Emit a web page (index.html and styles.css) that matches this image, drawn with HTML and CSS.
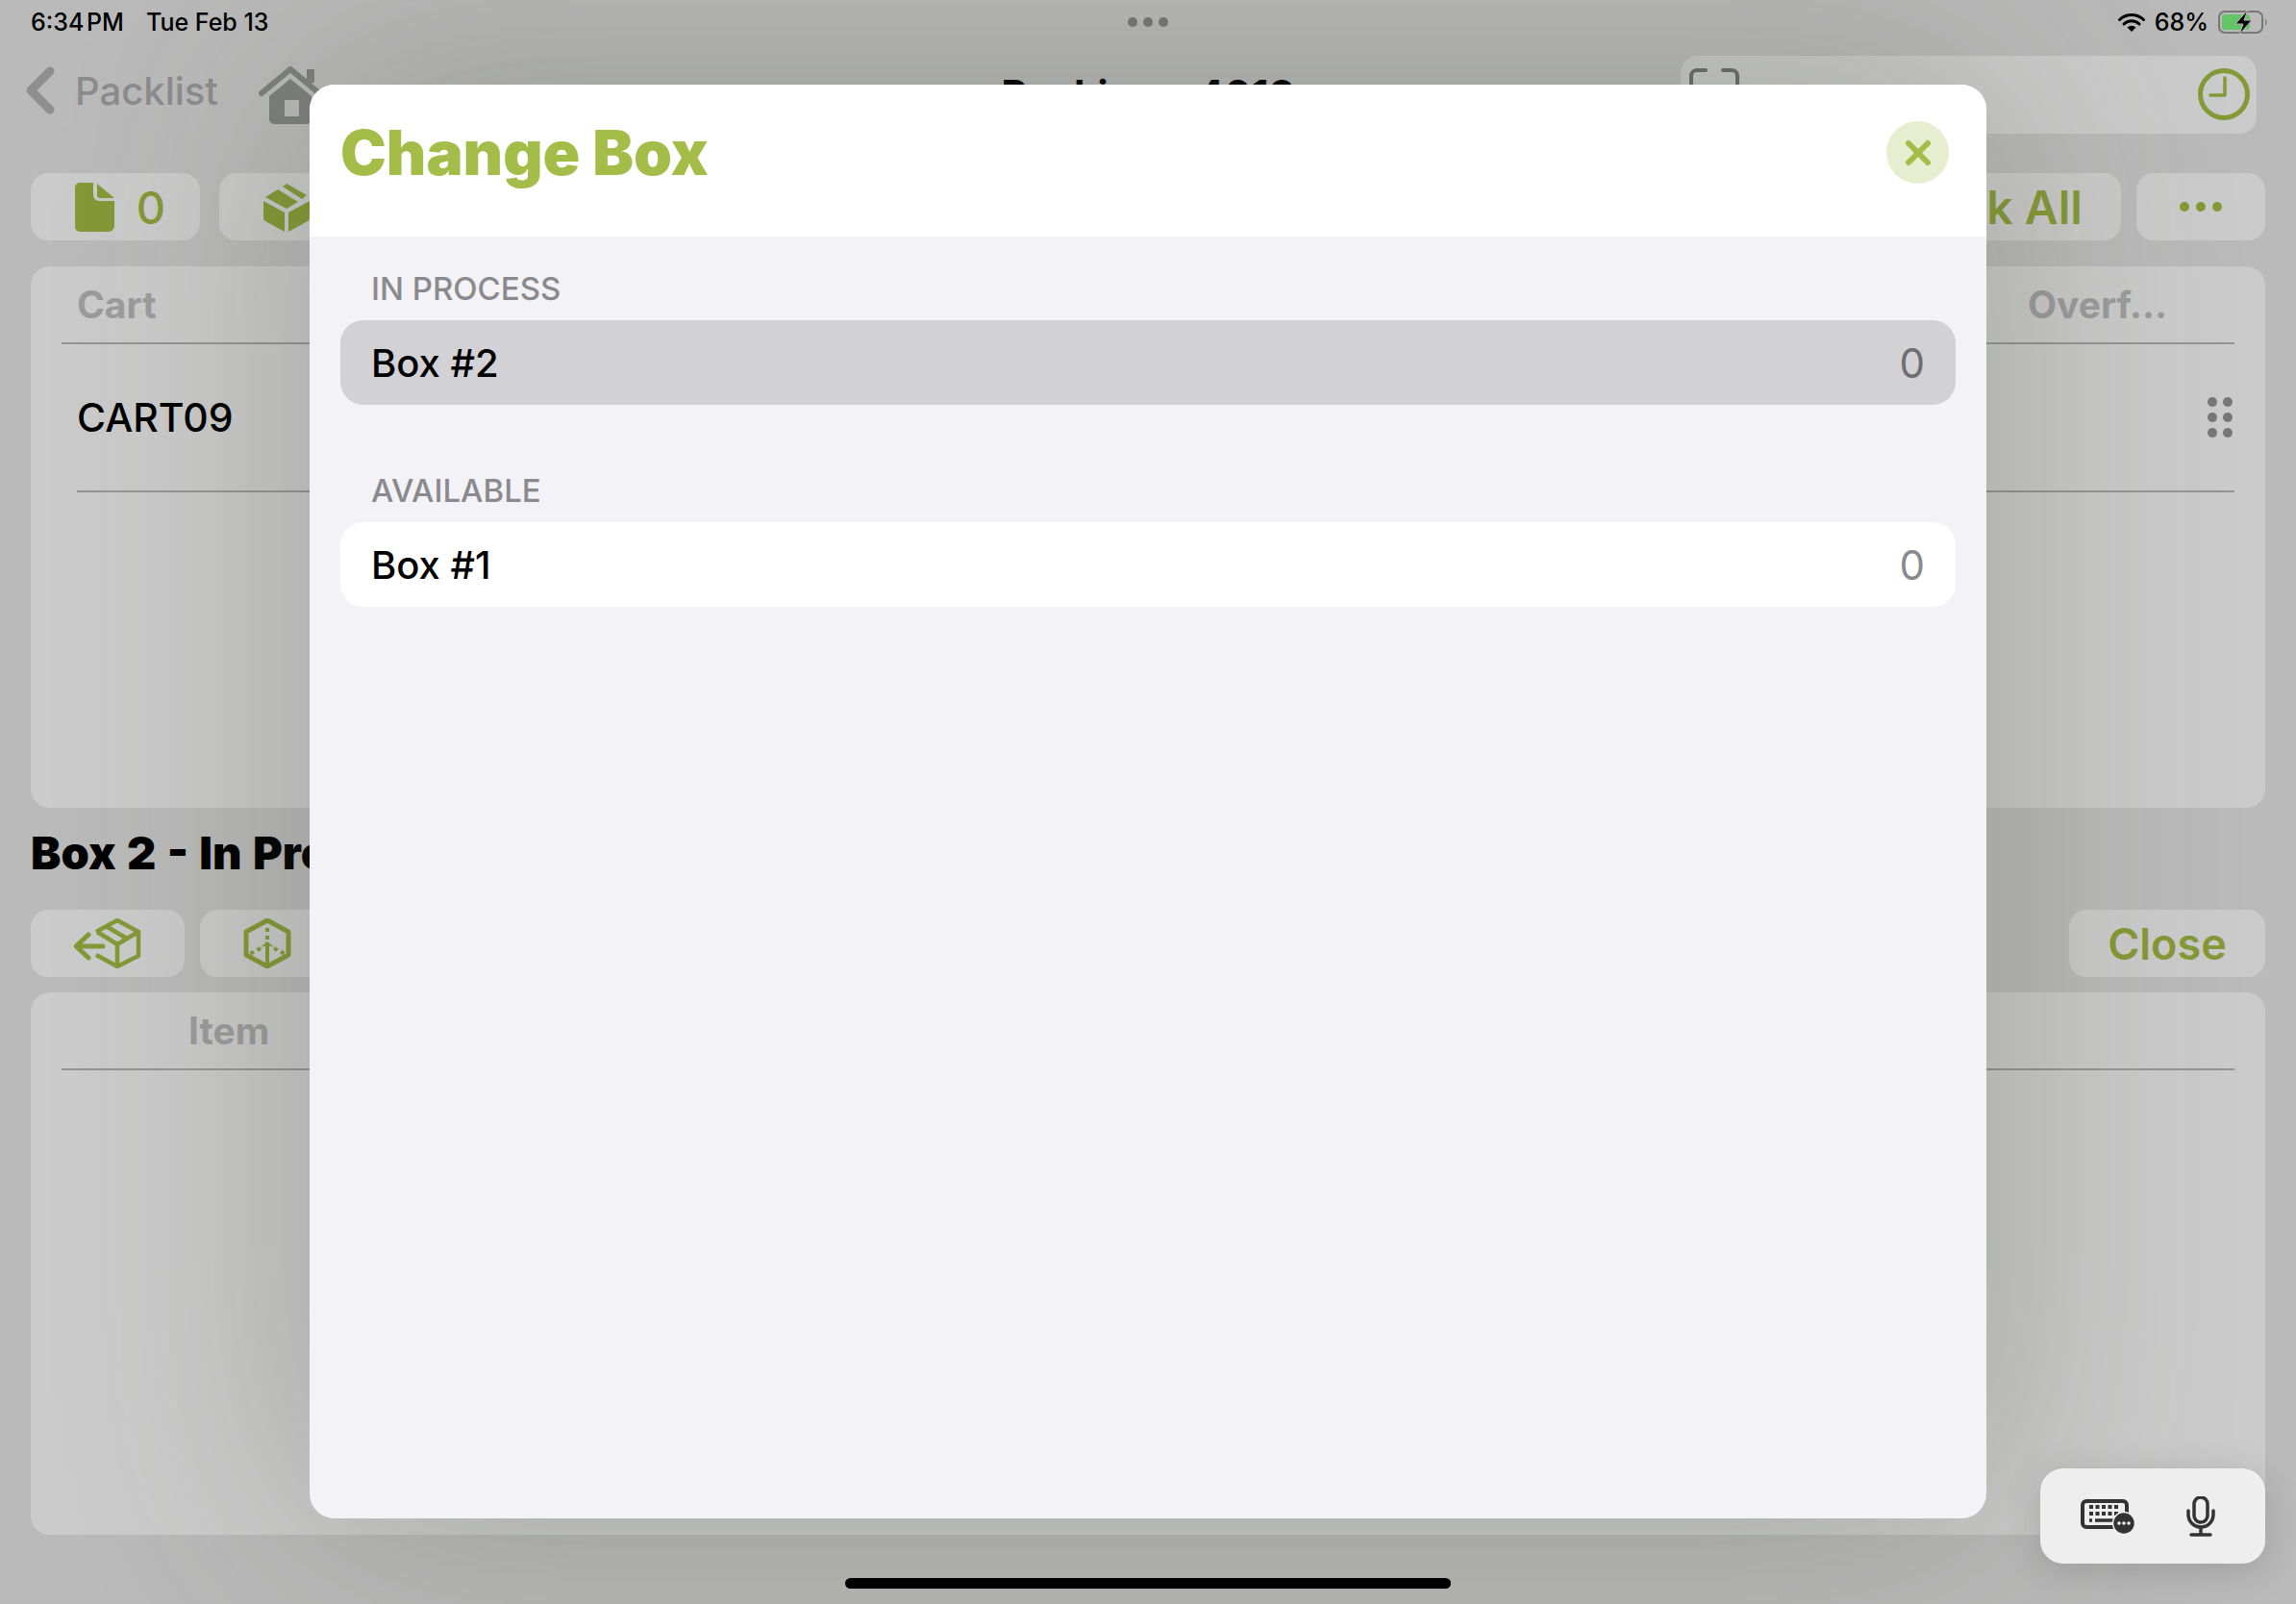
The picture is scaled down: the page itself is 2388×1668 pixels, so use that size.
FILE: index.html
```html
<!DOCTYPE html>
<html lang="en">
  <head>
    <meta charset="UTF-8" />
    <meta name="viewport" content="width=device-width, initial-scale=1.0" />
    <title>Change Box</title>
    <link rel="stylesheet" href="styles.css">
  </head>
  <body>
    <div class="screen">
      <!--Status bar-->
      <div class="status">
        <div class="status-left">
          <span class="time">6:34 PM</span>
          <span>Tue Feb 13</span>
        </div>
        <div class="status-dots"><i></i><i></i><i></i></div>
        <div class="status-right">
          <svg class="wifi" viewBox="0 0 28 20">
            <path d="M1.500 7.500a18 18 0 0 1 25 0" fill="none" stroke="#000" stroke-width="3" stroke-linecap="round" />
            <path d="M6 12a11.500 11.500 0 0 1 16 0" fill="none" stroke="#000" stroke-width="3" stroke-linecap="round" />
            <path d="M9.500 15.500a6.500 6.500 0 0 1 9 0L14 20z" fill="#000" />
          </svg>
          <span>68%</span>
          <svg class="battery" viewBox="0 0 52 26">
            <rect x="1" y="2" width="45" height="22" rx="6" fill="none" stroke="#777" stroke-width="2" />
            <rect x="4" y="5" width="29" height="16" rx="3" fill="#65c466" />
            <path d="M49 9.500c2 1 2 6 0 7z" fill="#777" />
            <path d="M31 0 18 15h8l-4 11 13-15h-8z" fill="#000" stroke="#bbb" stroke-width="1" />
          </svg>
        </div>
      </div>

      <!--Nav bar-->
      <div class="nav">
        <div class="nav-left">
          <svg class="back" viewBox="0 0 30 50">
            <path d="M25 5 5 25l20 20" fill="none" stroke="#8f8f8f" stroke-width="9" stroke-linecap="round" stroke-linejoin="round" />
          </svg>
          <span class="nav-back">Packlist</span>
          <svg class="home" viewBox="0 0 70 60">
            <path d="M3 28 33 3l30 25" fill="none" stroke="#7d7f7c" stroke-width="6" stroke-linecap="round" stroke-linejoin="round" />
            <path d="M50 3h8v14h-8z" fill="#7d7f7c" />
            <path d="M11 31 33 13l22 18v24a5 5 0 0 1-5 5H16a5 5 0 0 1-5-5zM27 35v17h15V35z" fill="#7d7f7c" fill-rule="evenodd" />
          </svg>
        </div>
        <div class="nav-title">Packing - 4013</div>
        <div class="search">
          <svg class="scan" viewBox="0 0 52 52">
            <path d="M2 16V8a6 6 0 0 1 6-6h9M35 2h9a6 6 0 0 1 6 6v8" fill="none" stroke="#6c6d6b" stroke-width="4" stroke-linecap="round" />
          </svg>
          <svg class="clock" viewBox="0 0 54 54">
            <circle cx="27" cy="27" r="24.500" fill="none" stroke="#869937" stroke-width="5" />
            <path d="M28 10v18H13" fill="none" stroke="#869937" stroke-width="3.500" stroke-linecap="round" stroke-linejoin="round" />
          </svg>
        </div>
      </div>

      <!--Top toolbar-->
      <div class="toolbar">
        <div class="tool tool-doc">
          <svg class="doc" viewBox="0 0 41 51">
            <path d="M5 0h14v13a6 6 0 0 0 6 6h16v26a6 6 0 0 1-6 6H5a5 5 0 0 1-5-5V5a5 5 0 0 1 5-5z" fill="#869937" />
            <path d="M23 1 41 16H26a3 3 0 0 1-3-3z" fill="#869937" />
          </svg>
          <span>0</span>
        </div>
        <div class="tool tool-box">
          <svg class="box-fill" viewBox="0 0 48 51">
            <path d="M0 19 22 31v20L2 40q-2-1-2-4zM26 31 48 19v17q0 3-2 4L26 51z" fill="#869937" />
            <path d="M2 15 15 7 36 20 24 27zM20 4l3-2q1-2 3 0L45 13 40 17z" fill="#869937" />
          </svg>
        </div>
        <div class="spacer"></div>
        <div class="tool tool-pack">Pack All</div>
        <div class="tool tool-more"><i></i><i></i><i></i></div>
      </div>

      <!--Cart table-->
      <div class="panel panel-cart">
        <div class="panel-head">
          <span>Cart</span>
          <span class="overflow">Overf...</span>
        </div>
        <div class="cart-row">
          <span>CART09</span>
          <div class="grip"><i></i><i></i><i></i><i></i><i></i><i></i></div>
        </div>
      </div>

      <h2 class="box-title">Box 2 - In Process</h2>

      <!--Box toolbar-->
      <div class="toolbar toolbar-box">
        <div class="tool tool-return">
          <svg class="box-return" viewBox="0 0 70 52">
            <path d="M15 17 2 29l13 12M3 29h27" fill="none" stroke="#869937" stroke-width="5" stroke-linecap="round" stroke-linejoin="round" />
            <path d="M23 14 45 2l22 12v25L45 50 23 38M24 14l21 13 22-13M45 27v23M33 8l22 13" fill="none" stroke="#869937" stroke-width="4.500" stroke-linejoin="round" />
          </svg>
        </div>
        <div class="tool tool-cube">
          <svg class="cube" viewBox="0 0 50 52">
            <path d="M25 2 47 14v24L25 50 3 38V14z" fill="none" stroke="#869937" stroke-width="5" stroke-linejoin="round" />
            <path d="M25 27v23" fill="none" stroke="#869937" stroke-width="4" />
            <path d="M18 30 25 24l7 6-7-2z" fill="#869937" />
            <path d="M25 22V6M18 31 5 38M32 31l13 7" fill="none" stroke="#869937" stroke-width="4" stroke-dasharray="4 4" />
          </svg>
        </div>
        <div class="spacer"></div>
        <div class="tool tool-close">Close</div>
      </div>

      <!--Item table-->
      <div class="panel panel-items">
        <div class="panel-head panel-head-item">
          <span>Item</span>
        </div>
      </div>
    </div>

    <!--Change box sheet-->
    <div class="modal">
      <div class="modal-head">
        <h1>Change Box</h1>
        <div class="modal-close">
          <svg viewBox="0 0 28 28">
            <path d="M4 4l20 20M24 4 4 24" fill="none" stroke="#a4bd48" stroke-width="6" stroke-linecap="round" />
          </svg>
        </div>
      </div>
      <div class="modal-body">
        <div class="section-label">IN PROCESS</div>
        <div class="box-row selected">
          <span>Box #2</span>
          <span class="count">0</span>
        </div>
        <div class="section-label section-gap">AVAILABLE</div>
        <div class="box-row">
          <span>Box #1</span>
          <span class="count">0</span>
        </div>
      </div>
    </div>

    <!--Keyboard shortcut bar-->
    <div class="kb-bar">
      <svg class="kb" viewBox="0 0 56 36">
        <rect x="2" y="2" width="46" height="27" rx="4" fill="none" stroke="#333" stroke-width="4" />
        <path d="M9 8h30M9 15h30" fill="none" stroke="#333" stroke-width="4" stroke-dasharray="4 2.500" />
        <path d="M9 22h3M15 22h20" fill="none" stroke="#333" stroke-width="3.500" />
        <circle cx="45" cy="25" r="11.500" fill="#333" stroke="#eee" stroke-width="1.500" />
        <circle cx="40" cy="25" r="1.800" fill="#eee" />
        <circle cx="45" cy="25" r="1.800" fill="#eee" />
        <circle cx="50" cy="25" r="1.800" fill="#eee" />
      </svg>
      <svg class="mic" viewBox="0 0 30 42">
        <rect x="8" y="1" width="14" height="26" rx="7" fill="none" stroke="#333" stroke-width="3.500" />
        <path d="M2 15v4a13 13 0 0 0 26 0v-4M15 32v7M5 40h20" fill="none" stroke="#333" stroke-width="3.500" stroke-linecap="round" />
      </svg>
    </div>

    <div class="home-bar"></div>
  </body>
</html>
```

FILE: styles.css
```css
html,
body {
  margin: 0;
  padding: 0;
  width: 100%;
  height: 100%;
  overflow: hidden;
}
body {
  position: relative;
  background: #bababa;
  font-family: "Inter", "Liberation Sans", sans-serif;
  color: #000;
}
svg {
  display: block;
  flex-shrink: 0;
}
.screen {
  display: flex;
  flex-direction: column;
  padding: 0 32px;
  box-sizing: border-box;
  height: 100%;
}

/*Status bar*/
.status {
  height: 46px;
  display: flex;
  align-items: center;
  justify-content: space-between;
  font-size: 25px;
  font-weight: 500;
  position: relative;
}
.status-left {
  display: flex;
  gap: 23px;
}
.time {
  word-spacing: -4px;
}
.status-dots {
  display: flex;
  gap: 6px;
  position: absolute;
  left: 1141px;
  top: 18px;
}
.status-dots i {
  width: 10px;
  height: 10px;
  border-radius: 50%;
  background: #777;
}
.status-right {
  display: flex;
  align-items: center;
  gap: 10px;
  margin-right: -3px;
}
.wifi {
  width: 28px;
  height: 20px;
}
.battery {
  width: 52px;
  height: 26px;
}

/*Nav bar*/
.nav {
  margin-top: 12px;
  height: 81px;
  display: grid;
  grid-template-columns: 1fr auto 1fr;
  align-items: center;
}
.nav-left {
  display: flex;
  align-items: center;
  padding-bottom: 9px;
}
.back {
  width: 30px;
  height: 50px;
  margin-left: -5px;
}
.nav-back {
  font-size: 40px;
  font-weight: 500;
  color: #8c8c8c;
  margin-left: 21px;
}
.home {
  width: 70px;
  height: 60px;
  margin-left: 42px;
  margin-top: 9px;
}
.nav-title {
  font-size: 42px;
  font-weight: 700;
}
.search {
  justify-self: end;
  width: 599px;
  height: 81px;
  margin-right: 9px;
  box-sizing: border-box;
  padding: 13px 7px 0 9px;
  background: #cbcbcb;
  border-radius: 18px;
  display: flex;
  justify-content: space-between;
}
.scan {
  width: 52px;
  height: 52px;
}
.clock {
  width: 54px;
  height: 54px;
}

/*Toolbars*/
.toolbar {
  margin-top: 41px;
  height: 70px;
  display: flex;
  gap: 20px;
}
.spacer {
  flex: 1;
}
.tool {
  background: #cbcbcb;
  border-radius: 18px;
  display: flex;
  align-items: center;
  justify-content: center;
  color: #869937;
  font-size: 47px;
  font-weight: 500;
}
.tool-doc {
  width: 176px;
  box-sizing: border-box;
  padding-left: 10px;
  gap: 23px;
}
.doc {
  width: 41px;
  height: 51px;
}
.tool-box {
  width: 170px;
  box-sizing: border-box;
  padding-left: 46px;
  justify-content: flex-start;
}
.box-fill {
  width: 48px;
  height: 51px;
}
.tool-pack {
  width: 266px;
  margin-right: -4px;
  font-size: 48px;
  font-weight: 600;
}
.tool-more {
  width: 134px;
  gap: 7px;
}
.tool-more i {
  width: 10px;
  height: 10px;
  border-radius: 50%;
  background: #869937;
}
.toolbar-box {
  margin-top: 0;
  gap: 16px;
}
.tool-return {
  width: 160px;
}
.box-return {
  width: 70px;
  height: 52px;
}
.tool-cube {
  width: 140px;
}
.cube {
  width: 50px;
  height: 52px;
}
.tool-close {
  width: 204px;
  font-size: 45px;
  font-weight: 600;
}

/*Tables*/
.panel {
  background: #cbcbcb;
  border-radius: 20px;
  padding: 0 32px;
}
.panel-cart {
  margin-top: 27px;
  height: 563px;
}
.panel-items {
  margin-top: 16px;
  height: 564px;
}
.panel-head {
  height: 79px;
  padding-left: 16px;
  padding-right: 70px;
  border-bottom: 2px solid #959595;
  display: flex;
  align-items: center;
  justify-content: space-between;
  font-size: 39px;
  font-weight: 700;
  color: #9c9c9c;
}
.panel-head-item {
  padding-left: 132px;
}
.cart-row {
  margin-left: 16px;
  height: 152px;
  border-bottom: 2px solid #959595;
  display: flex;
  align-items: center;
  justify-content: space-between;
  padding-right: 2px;
  font-size: 41px;
  font-weight: 500;
}
.grip {
  display: grid;
  grid-template-columns: 10px 10px;
  gap: 6px;
}
.grip i {
  width: 10px;
  height: 10px;
  border-radius: 50%;
  background: #777;
}
.box-title {
  margin: 0;
  height: 92px;
  padding-bottom: 14px;
  display: flex;
  align-items: center;
  font-size: 47px;
  font-weight: 900;
  word-spacing: 2px;
}

/*Modal*/
.modal {
  position: absolute;
  left: 322px;
  top: 88px;
  width: 1744px;
  height: 1491px;
  border-radius: 26px;
  overflow: hidden;
  background: #f2f2f7;
  display: flex;
  flex-direction: column;
  box-shadow: 0 0 400px rgba(60, 70, 50, 0.3);
}
.modal-head {
  height: 141px;
  padding: 0 39px 17px 32px;
  background: #fff;
  display: flex;
  align-items: center;
  justify-content: space-between;
  flex-shrink: 0;
}
.modal-head h1 {
  margin: 0;
  font-size: 64px;
  font-weight: 900;
  color: #a4bd48;
}
.modal-close {
  width: 65px;
  height: 65px;
  border-radius: 50%;
  background: #e7edcf;
  display: flex;
  align-items: center;
  justify-content: center;
}
.modal-close svg {
  width: 28px;
  height: 28px;
}
.modal-body {
  padding: 21px 32px 0;
}
.section-label {
  height: 66px;
  line-height: 66px;
  padding-left: 32px;
  font-size: 33px;
  font-weight: 500;
  color: #8a8a8e;
}
.section-gap {
  margin-top: 56px;
}
.box-row {
  height: 88px;
  background: #fff;
  border-radius: 24px;
  display: flex;
  align-items: center;
  justify-content: space-between;
  padding: 0 32px;
  font-size: 40px;
  font-weight: 500;
}
.box-row.selected {
  background: #d1d1d6;
}
.count {
  font-size: 42px;
  font-weight: 400;
  color: #8a8a8e;
}
.selected .count {
  color: #6d6d72;
}

/*Floating bits*/
.kb-bar {
  position: absolute;
  left: 2122px;
  top: 1527px;
  width: 234px;
  height: 99px;
  box-sizing: border-box;
  padding: 0 52px 0 42px;
  border-radius: 24px;
  background: #eeeeee;
  box-shadow: 0 8px 40px rgba(0, 0, 0, 0.15);
  display: flex;
  align-items: center;
  justify-content: space-between;
}
.kb {
  width: 56px;
  height: 36px;
}
.mic {
  width: 30px;
  height: 42px;
}
.home-bar {
  position: absolute;
  left: 879px;
  top: 1641px;
  width: 630px;
  height: 11px;
  border-radius: 6px;
  background: #000;
}
```
